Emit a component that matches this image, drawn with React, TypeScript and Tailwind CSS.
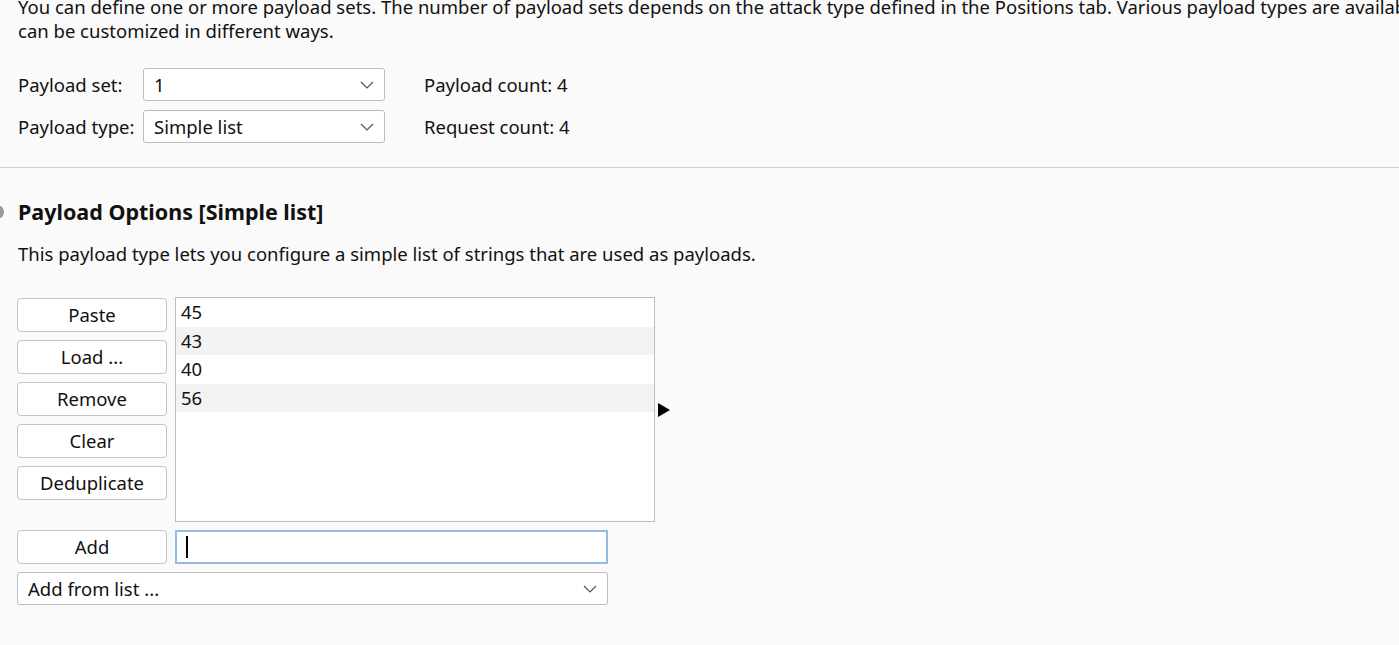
import React from "react";

function Chevron() {
  return (
    <svg viewBox="0 0 14 8" className="w-[14px] h-[8px]" fill="none" stroke="#555" strokeWidth="1.2">
      <path d="M1 1l6 6 6-6" />
    </svg>
  );
}

function Select({ value, width }: { value: string; width: string }) {
  return (
    <div
      className={`${width} h-[33px] flex items-center justify-between pl-[10px] pr-[10px] bg-white border border-[#bcbcbc] rounded-[3px]`}
    >
      <span>{value}</span>
      <Chevron />
    </div>
  );
}

function Btn({ label }: { label: string }) {
  return (
    <div className="w-[150px] h-[34px] flex items-center justify-center bg-white border border-[#c4c4c4] rounded-[4px]">
      {label}
    </div>
  );
}

const payloads = ["45", "43", "40", "56"];

export default function App() {
  return (
    <div
      className="h-[645px] w-[1399px] overflow-hidden bg-[#fafafa] text-[#111] text-[18.5px] leading-[24px]"
      style={{ fontFamily: '"Noto Sans", "Liberation Sans", sans-serif' }}
    >
      <div className="px-[18px] -mt-[5px]">
        <p className="whitespace-nowrap">
          You can define one or more payload sets. The number of payload sets depends on the attack type defined in
          the Positions tab. Various payload types are available for each payload set
        </p>
        <p>can be customized in different ways.</p>

        <div className="mt-[25px] flex flex-col gap-[9px]">
          <div className="flex items-center">
            <span className="w-[125px]">Payload set:</span>
            <Select value="1" width="w-[242px]" />
            <span className="ml-[39px]">Payload count: 4</span>
          </div>
          <div className="flex items-center">
            <span className="w-[125px]">Payload type:</span>
            <Select value="Simple list" width="w-[242px]" />
            <span className="ml-[39px]">Request count: 4</span>
          </div>
        </div>
      </div>

      <div className="mt-[24px] h-px bg-[#cfcfcf]" />

      <div className="relative px-[18px] pt-[30px]">
        <div className="absolute left-[-10px] top-[37px] w-[14px] h-[14px] rounded-full bg-[#9a9a9a]" />
        <h2 className="font-bold text-[21.5px] leading-[28px]">Payload Options [Simple list]</h2>
        <p className="mt-[16px]">This payload type lets you configure a simple list of strings that are used as payloads.</p>

        <div className="mt-[32px] flex items-start">
          <div className="flex flex-col gap-[8px] -ml-px">
            <Btn label="Paste" />
            <Btn label="Load ..." />
            <Btn label="Remove" />
            <Btn label="Clear" />
            <Btn label="Deduplicate" />
          </div>
          <div className="ml-[8px] w-[480px] h-[225px] -mt-px bg-white border border-[#bdbdbd]">
            {payloads.map((p, i) => (
              <div
                key={p}
                className={`h-[28.5px] pl-[5px] flex items-center ${i % 2 === 1 ? "bg-[#f2f2f2]" : "bg-white"}`}
              >
                {p}
              </div>
            ))}
          </div>
          <svg viewBox="0 0 12 14" className="ml-[3px] mt-[105px] w-[12px] h-[14px]">
            <path d="M0 0L12 7L0 14Z" fill="#000" />
          </svg>
        </div>

        <div className="mt-[8px] flex items-center -ml-px">
          <Btn label="Add" />
          <div className="ml-[8px] w-[433px] h-[34px] bg-white border-2 border-[#94bbe6] flex items-center pl-[9px]">
            <span className="w-[2px] h-[22px] bg-black" />
          </div>
        </div>
        <div className="mt-[8px] -ml-px">
          <Select value="Add from list ..." width="w-[591px]" />
        </div>
      </div>
    </div>
  );
}
